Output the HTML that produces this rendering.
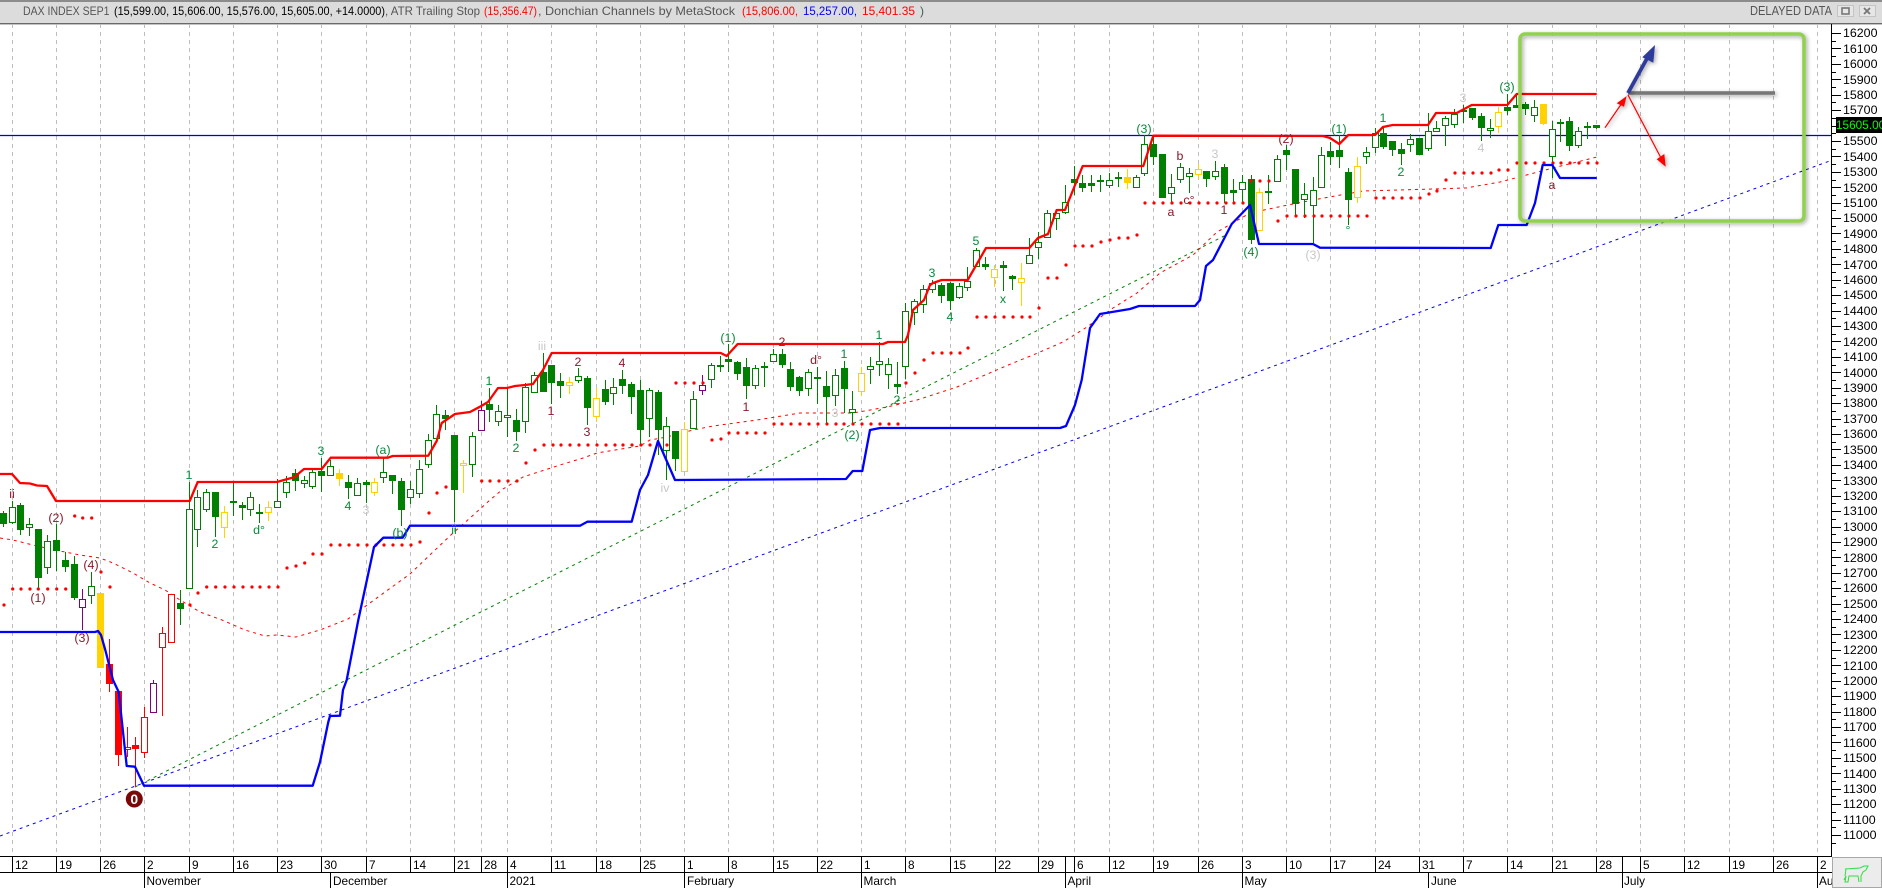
<!DOCTYPE html>
<html><head><meta charset="utf-8"><title>DAX INDEX SEP1</title>
<style>
html,body{margin:0;padding:0;background:#fff;width:1882px;height:888px;overflow:hidden;font-family:"Liberation Sans",sans-serif}
#t{position:absolute;left:0;top:0;width:1882px;height:888px}
#axis{position:absolute;left:1843px;top:26.3px;font-size:12.4px;line-height:15.423px;color:#000;white-space:nowrap}
#px{position:absolute;left:1836px;top:117px;width:46px;height:16px;background:#000;color:#00ff00;font-size:11.8px;line-height:16px;text-align:center;white-space:nowrap;overflow:hidden}
text{font-family:"Liberation Sans",sans-serif}
.d text{font-size:11.8px;fill:#000}
.l text{font-size:12.4px;text-anchor:middle}
.gr{fill:#0a8a3a}.br{fill:#8b1a2a}.gy{fill:#c8c8c8}
</style></head><body>
<svg id="t" width="1882" height="888" viewBox="0 0 1882 888" xmlns="http://www.w3.org/2000/svg">
<defs><filter id="sh" filterUnits="userSpaceOnUse" x="1480" y="0" width="380" height="260"><feDropShadow dx="1.5" dy="1.5" stdDeviation="2" flood-color="#000" flood-opacity=".35"/></filter></defs>
<rect x="0" y="0" width="1882" height="24" fill="#dcdcdc"/>
<rect x="0" y="0" width="1882" height="2" fill="#8c8c8c"/>
<rect x="0" y="23" width="1882" height="1.4" fill="#6a6a6a"/>
<g font-size="12">
<text x="23" y="15" fill="#555" textLength="86.5" lengthAdjust="spacingAndGlyphs">DAX INDEX SEP1</text>
<text x="114" y="15" fill="#000" textLength="271" lengthAdjust="spacingAndGlyphs">(15,599.00, 15,606.00, 15,576.00, 15,605.00, +14.0000)</text>
<text x="385" y="15" fill="#555" textLength="95" lengthAdjust="spacingAndGlyphs">, ATR Trailing Stop</text>
<text x="484" y="15" fill="#f00" textLength="53" lengthAdjust="spacingAndGlyphs">(15,356.47)</text>
<text x="538" y="15" fill="#555" textLength="197" lengthAdjust="spacingAndGlyphs">, Donchian Channels by MetaStock</text>
<text x="742" y="15" fill="#f00" textLength="56" lengthAdjust="spacingAndGlyphs">(15,806.00,</text>
<text x="803" y="15" fill="#00f" textLength="54" lengthAdjust="spacingAndGlyphs">15,257.00,</text>
<text x="862" y="15" fill="#f00" textLength="53" lengthAdjust="spacingAndGlyphs">15,401.35</text>
<text x="920" y="15" fill="#555">)</text>
<text x="1750" y="15" fill="#555" font-size="12.5" textLength="82" lengthAdjust="spacingAndGlyphs">DELAYED DATA</text>
</g>
<g>
<rect x="1837.5" y="5.5" width="16" height="11" fill="#e6e6e6" stroke="#c4c4c4"/>
<rect x="1842" y="8" width="7" height="6" fill="none" stroke="#777" stroke-width="1.6"/>
<rect x="1859.5" y="5.5" width="16" height="11" fill="#e6e6e6" stroke="#c4c4c4"/>
<path d="M1864 8l6 6M1870 8l-6 6" stroke="#777" stroke-width="1.8" fill="none"/>
</g>
<g id="grid"></g>
<path d="M0 135.5H1831" stroke="#0000dc" stroke-width="1.2"/>
<path d="M0 836L1831 160.5" stroke="#0000f0" stroke-width="1" stroke-dasharray="3 4" fill="none"/>
<path d="M135 787L1228 234" stroke="#008000" stroke-width="1" stroke-dasharray="3 4" fill="none"/>
<path id="ma" fill="none" stroke="#f00" stroke-width="1" stroke-dasharray="3 4" d="M0 538L13 540 25 543 37 546 60 551 80 555 100 558 113 563 133 573 150 583 165 590 180 600 200 612 222 620 245 630 265 636 277 635 296 637 320 630 348 619 385 592 410 574 433 552 453 533 470 518 490 500 503 489 523 477 560 465 583 458 597 453 640 446 650 440 667 437 693 430 713 426 757 420 800 413 853 413 887 407 917 400 957 387 978 378 1013 363 1033 355 1063 342 1087 327 1113 308 1137 293 1160 273 1193 255 1217 232 1250 213 1283 206 1313 200 1363 191 1433 189 1466 188 1500 182 1553 168 1597 157"/>
<g id="candles" shape-rendering="crispEdges"></g>
<path id="dots" fill="none" stroke="#f00" stroke-width="3.2" stroke-linecap="round"></path>
<polyline fill="none" stroke="#f00" stroke-width="2.3" stroke-linejoin="round" points="0,474 12,474 20,483 30,483.5 37,485.5 47,486 56,501 189.7,501 197.7,482 277,482 284,480 295,477 298,474 304,469 321.7,469 330.7,457.7 388,457.7 392.7,456 428.3,455.7 436.7,441 441.7,423 455,414 470,412 480,406.7 488,402 498,388 507,388 515,386 525,385 533,384 543,370 551.7,353 720.7,353 726.7,356 737.7,344 883,344 888,342 905,342 908,335 913,310 924,300 930,285 933,283 941.7,280 967.7,280 986,248 1029.3,248 1038,238 1048,234 1056.7,210 1065,210 1082.7,166 1143.3,166 1153.3,135.7 1323,136 1330,138 1339.3,144 1348.3,135 1375,135 1383,127 1392.7,125 1428,125 1436,113 1456.7,113 1471.7,105 1507.3,105 1516.7,94 1596.7,94"/>
<polyline fill="none" stroke="#00f" stroke-width="2.3" stroke-linejoin="round" points="0,632 95,632 98,631 101,635 105.3,650 113,680 118.7,692 126.7,766 135,766.7 144,785.7 312.7,785.7 320,762 328.3,722 330,716 340,715.7 343,690 346.7,680 358.3,620 374,547 383.3,537.7 402.7,537.7 410,525.7 580,525.7 587.3,521.7 631.7,521.7 640,490 648,475 658,441 675,480 846,479 852.7,471 862.3,471 870,430 880,428 1060,428 1066,426 1075,405 1081.7,380 1090,328 1100,314 1130,309 1139,306 1195,306 1200,300 1206,266 1213,260 1231.7,224 1250,205 1259,244 1313,244 1320,247.7 1490.7,248 1498.3,225 1526.7,225 1535,203 1542.7,165 1552.3,165 1560,178 1596.7,178"/>
<g class="l">
<text class="br" x="12" y="498">ii</text><text class="br" x="56" y="522">(2)</text><text class="br" x="38" y="602">(1)</text><text class="br" x="82" y="642">(3)</text><text class="br" x="91" y="569">(4)</text>
<text class="gr" x="189" y="479">1</text><text class="gr" x="215" y="548">2</text><text class="gr" x="259" y="534">d°</text><text class="gr" x="321" y="455">3</text><text class="gr" x="348" y="510">4</text><text class="gy" x="366" y="514">3</text><text class="gr" x="383" y="454">(a)</text><text class="gr" x="400" y="537">(b)</text><text class="gr" x="454" y="534">ii</text>
<text class="gr" x="489" y="385">1</text><text class="gr" x="516" y="452">2</text><text class="gy" x="542" y="350">iii</text><text class="br" x="551" y="415">1</text><text class="br" x="578" y="366">2</text><text class="br" x="587" y="436">3</text><text class="br" x="622" y="367">4</text><text class="gr" x="728" y="342">(1)</text><text class="br" x="746" y="411">1</text><text class="gy" x="665" y="492">iv</text>
<text class="br" x="782" y="346">2</text><text class="br" x="816" y="364">d°</text><text class="gr" x="844" y="358">1</text><text class="gy" x="835" y="417">3</text><text class="gr" x="897" y="404">2</text><text class="gr" x="852" y="439">(2)</text><text class="gr" x="879" y="339">1</text>
<text class="gr" x="932" y="277">3</text><text class="gr" x="950" y="321">4</text><text class="gr" x="976" y="245">5</text><text class="gr" x="1003" y="303">x</text>
<text class="gr" x="1144" y="133">(3)</text><text class="br" x="1180" y="160">b</text><text class="br" x="1171" y="216">a</text><text class="br" x="1189" y="204">c°</text><text class="gy" x="1215" y="158">3</text><text class="br" x="1224" y="214">1</text><text class="gr" x="1251" y="256">(4)</text><text class="br" x="1286" y="143">(2)</text><text class="gy" x="1313" y="259">(3)</text><text class="gr" x="1339" y="133">(1)</text><text class="gr" x="1348" y="234">°</text><text class="gr" x="1383" y="122">1</text><text class="gr" x="1401" y="176">2</text><text class="gy" x="1481" y="152">4</text><text class="gy" x="1463" y="102">3</text><text class="gr" x="1507" y="91">(3)</text><text class="br" x="1552" y="189">a</text>
</g>
<circle cx="134.3" cy="799" r="8.5" fill="#7a0808"/>
<text x="134.3" y="804" font-size="14" font-weight="bold" fill="#fff" text-anchor="middle">0</text>
<rect x="1520" y="34" width="284" height="187" rx="5" fill="none" stroke="#92d050" stroke-width="3.6" filter="url(#sh)"/>
<rect x="1628" y="91.2" width="147" height="3.6" fill="#777" filter="url(#sh)"/>
<g filter="url(#sh)">
<path d="M1628 93L1650 53" stroke="#2e3a9a" stroke-width="3.8" fill="none"/>
<path d="M1655 45L1642.3 57.3 1653.3 62.7Z" fill="#2e3a9a"/>
<path d="M1605 127.7L1622 103" stroke="#f00" stroke-width="1.2" fill="none"/>
<path d="M1626.7 96L1616.7 103.3 1624 106.7Z" fill="#f00"/>
<path d="M1628 95L1661 158" stroke="#f00" stroke-width="1.2" fill="none"/>
<path d="M1665.7 166.7L1656.7 159.3 1664.3 154Z" fill="#f00"/>
</g>
<g id="ticks"></g>
<rect x="0" y="857" width="1832" height="31" fill="#fff"/>
<path d="M0 856.5H1832M0 872.5H1832" stroke="#000" stroke-width="1" shape-rendering="crispEdges"/>
<path id="seps" stroke="#000" stroke-width="1" fill="none" shape-rendering="crispEdges"></path>
<g class="d">
<text x="15" y="869">12</text><text x="59" y="869">19</text><text x="103" y="869">26</text><text x="147" y="869">2</text><text x="192" y="869">9</text><text x="236" y="869">16</text><text x="280" y="869">23</text><text x="324" y="869">30</text><text x="369" y="869">7</text><text x="413" y="869">14</text><text x="457" y="869">21</text><text x="484" y="869">28</text><text x="510" y="869">4</text><text x="554" y="869">11</text><text x="599" y="869">18</text><text x="643" y="869">25</text><text x="687" y="869">1</text><text x="731" y="869">8</text><text x="776" y="869">15</text><text x="820" y="869">22</text><text x="864" y="869">1</text><text x="908" y="869">8</text><text x="953" y="869">15</text><text x="998" y="869">22</text><text x="1041" y="869">29</text><text x="1077" y="869">6</text><text x="1112" y="869">12</text><text x="1156" y="869">19</text><text x="1201" y="869">26</text><text x="1245" y="869">3</text><text x="1289" y="869">10</text><text x="1333" y="869">17</text><text x="1378" y="869">24</text><text x="1422" y="869">31</text><text x="1466" y="869">7</text><text x="1510" y="869">14</text><text x="1555" y="869">21</text><text x="1599" y="869">28</text><text x="1643" y="869">5</text><text x="1687" y="869">12</text><text x="1732" y="869">19</text><text x="1776" y="869">26</text><text x="1820" y="869">2</text>
<text x="146.5" y="885">November</text><text x="333" y="885">December</text><text x="509.5" y="885">2021</text><text x="687" y="885">February</text><text x="863.5" y="885">March</text><text x="1067.5" y="885">April</text><text x="1244.5" y="885">May</text><text x="1431" y="885">June</text><text x="1624" y="885">July</text><text x="1819" y="885">Au</text>
</g>
<rect x="1832.5" y="857.5" width="49" height="30" fill="#ececec" stroke="#a8a8a8"/>
<path d="M1845 869L1860 868 1864 866 1868 866 1866 870 1863 872 1861 876V882M1859 882L1858 876 1849 876 1848 882H1845L1846 876 1844 880M1846 869L1845 876" fill="none" stroke="#33dd44" stroke-width="1"/>
</svg>
<div id="axis">16200<br>16100<br>16000<br>15900<br>15800<br>15700<br>15600<br>15500<br>15400<br>15300<br>15200<br>15100<br>15000<br>14900<br>14800<br>14700<br>14600<br>14500<br>14400<br>14300<br>14200<br>14100<br>14000<br>13900<br>13800<br>13700<br>13600<br>13500<br>13400<br>13300<br>13200<br>13100<br>13000<br>12900<br>12800<br>12700<br>12600<br>12500<br>12400<br>12300<br>12200<br>12100<br>12000<br>11900<br>11800<br>11700<br>11600<br>11500<br>11400<br>11300<br>11200<br>11100<br>11000</div>
<div id="px">15605.00</div>
<script>
var NS="http://www.w3.org/2000/svg";
function el(p,n,a){var e=document.createElementNS(NS,n);for(var k in a)e.setAttribute(k,a[k]);p.appendChild(e);return e}
var G=[12.5,56.5,100.5,144.5,189.5,233.5,277.5,321.5,366.5,410.5,454.5,481.5,507.5,551.5,596.5,640.5,684.5,728.5,773.5,817.5,861.5,905.5,950.5,995.5,1038.5,1074.5,1109.5,1153.5,1198.5,1242.5,1286.5,1330.5,1375.5,1419.5,1463.5,1507.5,1552.5,1596.5,1640.5,1684.5,1729.5,1773.5,1817.5];
var g="";G.forEach(function(x){g+="M"+x+" 24V856"});
el(document.getElementById("grid"),"path",{d:g,stroke:"#bdbdbd","stroke-width":1,"stroke-dasharray":"4 4",fill:"none","shape-rendering":"crispEdges"});
var s="M1831.5 24V857";G.forEach(function(x){s+="M"+x+" 857V872"});
s+="M1065.5 857V888M1622.5 857V888M144.5 872V888M330.5 872V888M507.5 872V888M684.5 872V888M861.5 872V888M1242.5 872V888M1428.5 872V888M1817.5 872V888";
document.getElementById("seps").setAttribute("d",s);
var t="";for(var i=0;i<=105;i++){var y=Math.round(33+i*7.7115)+.5;if(y<853)t+="M1832 "+y+"H"+(i%2?1836:1841)}
el(document.getElementById("ticks"),"path",{d:t,stroke:"#000","stroke-width":1,"shape-rendering":"crispEdges"});
var C="3.3 511 513.3 522.7 527 g;12 500.7 507.3 521.7 524 h;20.7 502.7 505 528.7 535 g;29.3 518.3 524 527.3 536 h;38.3 529 529 576.7 588 g;47.3 535 541.3 566.7 574 h;56.3 524 540 550 570.7 g;65.3 551.7 560 566 571.7 g;74 556 564.3 596.7 600 g;82.3 589.3 599.3 607.3 630 p;91.3 571.7 586.3 595.3 604 h;100.3 593 593 667 667 Y;109 639 664 683 692 R;118 691 691 754 766 R;127.3 727 747 749 757 r;135.3 737 745 748 787 R;144.3 707 717.3 752.3 757.7 r;153.3 680 683 711.7 711.7 p;162.3 626.7 633 646.7 715.7 r;171.3 594 594.3 641.7 642 r;180.3 590 603 607.7 625 g;189 481.7 509.3 588.3 588.3 h;197.7 490 496.7 528.7 546.7 h;206.7 489 492.3 509 511.7 h;215.7 492 492.3 515.7 536.7 g;224.3 506 512.3 526.7 537.7 y;233.3 483.3 501 502 515.7 g;242.3 501.7 505 506.7 520 g;250.7 491.7 496.7 509.3 515.7 h;259.3 504.3 512 513 522.7 g;268.3 501 507.3 512.3 520.7 y;277.3 479.3 501.3 506.7 507.3 h;286.3 476 482.3 492.3 497.7 h;295.3 469 472.7 480 490.7 g;304 476 480.3 483.3 488.3 h;312.3 469.3 472.3 486.3 489.3 h;321.3 458.3 471 474.7 491.7 g;330.3 460 466.3 475.3 475.3 h;339.3 469.3 473 478.3 485.7 Y;348.3 475 482 486.7 499 g;357.3 478.3 483.3 495.3 495.3 h;366 480 482 484.3 502.7 g;374.7 478.3 482.3 491.7 495.7 y;383.3 458.3 472.3 476.7 482.7 h;392.3 475 475 480 494 g;401.3 478.3 481 509 526 g;410.3 481 489.3 497.3 504 h;419.3 460 469.3 492.7 497.7 h;428 434 440.3 463.7 467.7 h;436.7 405 414 438.3 443 h;445.3 410 415 418 430 g;454.3 435 435 489 521.7 g;463.3 460 463.3 465.3 492.7 y;472.3 432 436 463.7 476.7 h;481 400.7 410 430 430 p;489.3 388.3 404 408.7 421.7 g;498.3 405 411.3 421.3 425.7 h;507.3 387.3 415.3 417.3 436.7 h;516.3 409 420 430.7 440.7 g;525.3 383.3 387.3 420.7 432.7 h;534.3 372.3 375.3 391.7 391.7 h;543.3 353.3 371.7 391 391 g;551.3 365 365 381.7 404 g;560.3 372.7 381 384.7 397.7 g;569.3 376.7 381.7 384.7 394 y;578.3 368.3 376.3 379.7 383.3 h;587.3 376 378.3 406.7 425 g;596.3 387.3 398.3 415.7 422.3 y;605 380 389.3 400.7 404.7 g;613.3 377.7 387.3 393.3 405 h;622.3 370 379.3 384.7 394 g;631.3 382 384.3 395.7 414 g;640.3 380 390 428.7 445 g;649.3 388.3 390.3 418.3 437.3 h;658 390 392 428.7 455 g;666.7 417.3 426.3 450.3 480 h;675.3 431 431 458 470.7 g;684.3 421.7 429.3 471.3 471.3 y;693.3 391 399.3 427.7 427.7 h;702.3 375 385.3 390.3 395 p;711.3 363.3 365.3 378.7 388.3 h;720 356 365 366 371.7 g;728.7 344 359 360.7 371.7 g;737.3 360.7 362.3 372.7 380 g;746.3 358.3 367 384.7 399.3 g;755.3 365 368.3 385.3 389 h;764.3 361.7 366 367 387.3 g;773.3 349 354.3 361.3 361.7 h;782 349 354 363.7 367.7 g;790.7 362.3 369.3 385.7 390.7 g;799.7 376 377 389.7 396 g;808.3 369.3 372.3 388.3 396 h;817.3 366.7 377 378 404 g;826.3 371 386 395.7 424 g;835.3 369.3 375.3 394.7 406 h;844 361 368.3 387.7 412.7 g;852.7 391 409.3 412.3 424.3 h;861.3 367.3 373.3 391.3 396 y;870.3 357.3 366 368.7 384 h;879.3 341.7 361.3 363.7 376 h;888.3 357.7 364.3 374.3 389.3 h;897 361.7 384 385.7 394 g;905.5 303 311.3 366.3 379 h;914.3 299 301.3 311.7 325 h;923.3 285 289.3 304.3 312.7 h;932.3 280 283.3 289.3 293.3 h;941.3 283 285.3 294.7 302.7 g;950.3 281.7 283 299.7 310 g;959 283 286.3 296.7 299.3 h;967.7 266.7 281.3 286.7 290.7 h;976.3 247.7 250.3 266 266 h;985.7 257 264.3 266 270 g;994.3 265 269.3 276.7 287.3 y;1003.3 261 265 267 290.7 g;1012.3 275 276.3 278.3 290 g;1021.3 263.3 278.3 281.7 306 y;1029.7 237.7 255.3 263.3 263.3 h;1038.7 232.3 242.3 246.7 259.3 h;1047.7 210 213.3 236.7 236.7 h;1056.7 209.3 213.3 217.7 230 h;1065.7 185 201.7 211.7 214 h;1074 166 179 181.7 195 g;1082.7 175 183.3 186.7 191.7 g;1091.3 175 183.3 184.7 191.7 g;1100.3 175 180 181 191.7 g;1109.3 173.3 180.3 185.3 188.3 h;1118.3 171.7 177 178 187.3 g;1127.3 169.3 177.3 182.3 189.3 Y;1136 175 176.7 186.7 187.3 h;1144.3 135 144.3 173.3 176 h;1153.3 135 144.3 155.7 165 g;1162.3 154 154 196.7 198.3 g;1171.3 174 186.7 193.3 201.7 h;1180.3 163.3 167.3 179.3 182.7 h;1189.3 168.3 173.3 176.3 192.7 h;1198 164.3 169.3 174.3 179 y;1206.7 171 171 177.7 186.7 g;1215.7 161 170.7 175.7 180 h;1224.7 164 167.3 192.7 203 g;1233.3 179.3 190 191.7 203 g;1242.3 175 182.3 189.3 203 h;1251 175 179.3 239.3 244 g;1259.3 188.3 192.3 230.3 230.3 y;1268.3 175 191 192.3 204.3 g;1277.3 155 159.3 180.7 181.7 h;1286.3 145 150 154.3 170 g;1295.3 169.3 169.3 203.3 215 g;1304.3 183.3 194.3 199.3 218.3 h;1313.3 177.3 190.3 204.7 243.3 h;1321.7 146.7 155.3 186.7 186.7 h;1330.7 141.7 151.3 155.7 165 g;1339.7 135 150.3 155.7 168.3 g;1348.3 167.7 172.3 198.7 225 g;1357.3 157.3 166.3 197.3 202.7 y;1366.3 147.3 151.7 156.3 164 h;1375 128 132.7 147.3 152.7 h;1383.7 126 133.3 145.7 148.7 g;1392.7 141 141 148.7 156 g;1401.7 143.3 149.3 152.7 165 g;1410.5 134.3 139.3 144.3 151.7 h;1419.5 138 138.3 153.7 154.3 g;1428 113.3 131.3 148.3 150.7 h;1436.7 121 128.3 131.3 131.7 h;1445.5 116 118.3 125.3 145.7 h;1454.3 109.3 114 124.3 128.3 h;1463.3 105 110 111 123 g;1472.3 108.3 108.3 116.7 120 g;1481.3 113.3 116.3 126.7 140.7 g;1490 119.3 128.3 130.3 138.3 h;1498.3 106.7 111.7 126 133.3 y;1507.3 94 107.3 110.3 115 g;1516 95 105.3 106.7 107.3 g;1525.3 101.7 104.3 107.7 115 g;1534.3 100 106.7 115 122.3 h;1543.3 104.3 104.3 122.7 125 Y;1552.3 120.7 129.3 155.7 177.7 h;1560.3 119.3 121.7 123.3 141.7 h;1569.3 117.3 121.3 144.7 150.7 g;1578.3 127.3 130.7 144.7 147.7 h;1587.3 122.3 126 127 139 g;1596.7 124.5 125.3 127 129.3 g";
var st={g:["#008000",1],Y:["#ffd200",1],R:["#f00",1],h:["#008000",0],y:["#ffd200",0],r:["#f00",0],p:["#800080",0]};
var P={};C.split(";").forEach(function(c){var a=c.split(" "),x=Math.floor(+a[0])+.5,hi=Math.round(+a[1]),tp=Math.round(+a[2])+.5,bt=Math.round(+a[3])+.5,lo=Math.round(+a[4]),k=a[5];
 var d="M"+x+" "+hi+"V"+tp+"M"+x+" "+bt+"V"+lo+"M"+(x-3)+" "+tp+"H"+(x+3)+"V"+bt+"H"+(x-3)+"Z";P[k]=(P[k]||"")+d});
var cg=document.getElementById("candles");
for(var k in P){var o=st[k];el(cg,"path",{d:P[k],stroke:o[0],"stroke-width":1,fill:o[1]?o[0]:"#fff"})}
var D="4,605;12.7,589;21,589;30,589;38.3,589;47.7,589;56.7,589;65.7,589;74.7,516;82.7,518;91.7,518;101,572;110,587;190,605;198,593;206.7,587;215.7,587;225,587;234,587;243,587;252,587;260,587;269,587;278,587;287,568;296,566;304.7,563;313,554;322,554;331,545;340,545;349,545;358,545;367,545;376,545;384,545;393,545;402,545;411,545;420,542;429,513;437,493;446,487;481.7,481;490,481;499,481;508,481;517,481;526,463;535,450;544,445;553,445;561,445;570,445;579,445;588,445;597,445;606,445;615,445;623,445;632,445;641,445;650,445;659,445;667,445;676,383;685,383;694,383;703,383;712,440;721,439;729,433;738,433;747,433;756,433;765,433;774,424;782,424;791,424;800,424;809,424;818,424;827,424;836,424;844,424;853,424;862,424;871,424;880,424;889,424;898,424;906,383;915,373;924,360;933,353;942,353;951,353;960,353;968,348;977,317;986,317;995,317;1004,317;1013,317;1022,317;1030,317;1039,308;1048,278;1057,278;1066,265;1075,246;1083,246;1092,246;1101,242;1110,240;1119,238;1128,238;1137,235;1145,203;1154,203;1163,203;1172,203;1181,203;1190,203;1199,203;1208,203;1217,203;1226,203;1234,203;1243,203;1251,181;1260,181;1269,181;1278,221;1287,216;1296,216;1305,216;1314,216;1322,216;1331,216;1340,216;1349,216;1358,216;1367,216;1376,198;1384,198;1393,198;1402,198;1411,198;1420,198;1429,194;1437,191;1446,180;1455,173;1464,173;1473,173;1482,173;1491,173;1499,170;1508,170;1517,163;1526,163;1535,163;1544,163;1553,163;1561,163;1570,163;1579,163;1588,163;1597,163";
var dp="";D.split(";").forEach(function(p){var a=p.split(",");dp+="M"+a[0]+" "+a[1]+"h.01"});
document.getElementById("dots").setAttribute("d",dp);
</script>
</body></html>
